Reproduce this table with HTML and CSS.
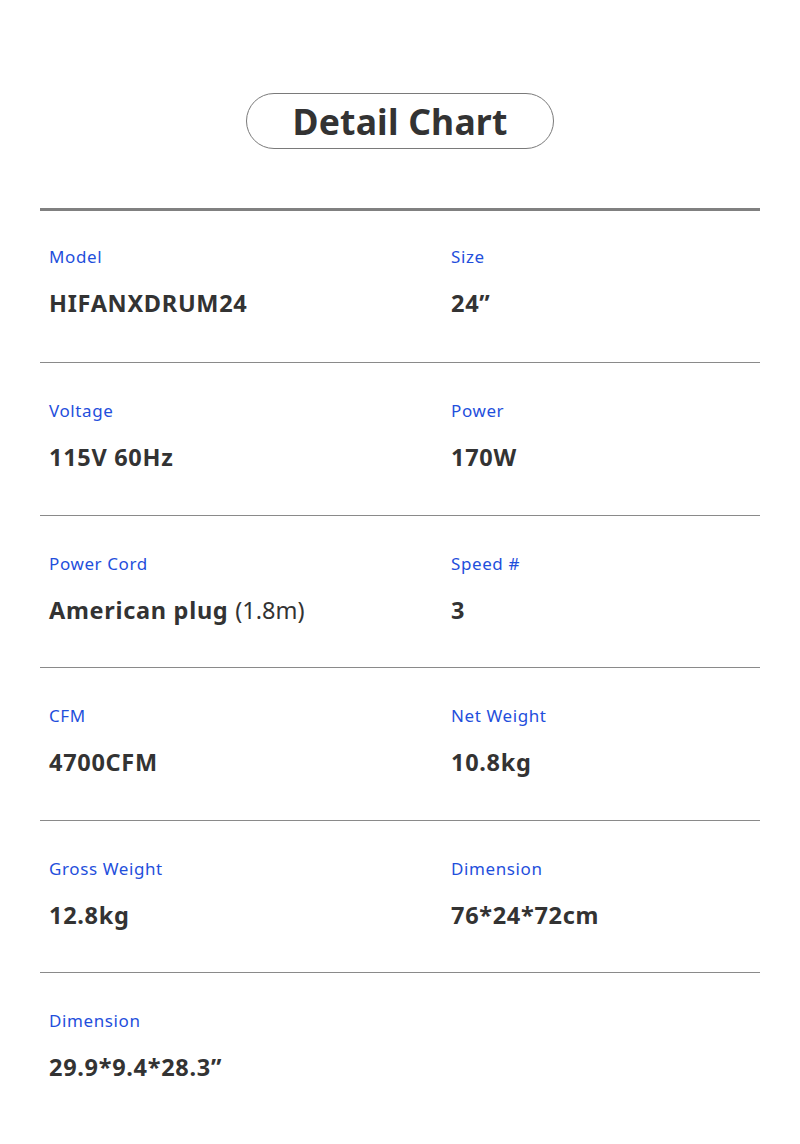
FILE: index.html
```html
<!DOCTYPE html>
<html lang="en">
<head>
<meta charset="utf-8">
<link rel="stylesheet" href="styles.css">
</head>
<body>
<div class="page">
  <div class="title-wrap"><div class="title">Detail Chart</div></div>
  <div class="chart">
    <div class="row">
      <div class="cell"><div class="label">Model</div><div class="value">HIFANXDRUM24</div></div>
      <div class="cell"><div class="label">Size</div><div class="value">24”</div></div>
    </div>
    <div class="row">
      <div class="cell"><div class="label">Voltage</div><div class="value">115V 60Hz</div></div>
      <div class="cell"><div class="label">Power</div><div class="value">170W</div></div>
    </div>
    <div class="row">
      <div class="cell"><div class="label">Power Cord</div><div class="value">American plug <span class="light">(1.8m)</span></div></div>
      <div class="cell"><div class="label">Speed #</div><div class="value">3</div></div>
    </div>
    <div class="row">
      <div class="cell"><div class="label">CFM</div><div class="value">4700CFM</div></div>
      <div class="cell"><div class="label">Net Weight</div><div class="value">10.8kg</div></div>
    </div>
    <div class="row">
      <div class="cell"><div class="label">Gross Weight</div><div class="value">12.8kg</div></div>
      <div class="cell"><div class="label">Dimension</div><div class="value">76*24*72cm</div></div>
    </div>
    <div class="row last">
      <div class="cell"><div class="label">Dimension</div><div class="value">29.9*9.4*28.3”</div></div>
    </div>
  </div>
</div>
</body>
</html>
```
FILE: styles.css
```css
html, body {
  margin: 0;
  padding: 0;
  background: #ffffff;
}
body {
  font-family: "Noto Sans", "Open Sans", sans-serif;
  color: #333333;
}
.page {
  width: 800px;
  height: 1144px;
  box-sizing: border-box;
  padding-top: 93px;
}
.title-wrap {
  display: flex;
  justify-content: center;
}
.title {
  width: 306px;
  height: 54px;
  border: 1px solid #7a7a7a;
  border-radius: 28px;
  display: flex;
  align-items: center;
  justify-content: center;
  font-size: 35.5px;
  font-weight: 700;
  color: #333333;
  letter-spacing: 0.2px;
}
.chart {
  margin: 59px 40px 0 40px;
  border-top: 3px solid #808080;
}
.row {
  display: grid;
  grid-template-columns: 402px 1fr;
  padding: 36px 0 42.5px 9px;
  border-bottom: 1px solid #8a8a8a;
}
.row:first-child {
  padding-top: 34px;
  padding-bottom: 44px;
}
.row.last {
  border-bottom: none;
}
.label {
  font-size: 17px;
  line-height: 24px;
  color: #1f4fdc;
  letter-spacing: 0.6px;
}
.value {
  margin-top: 19px;
  font-size: 23.5px;
  line-height: 30px;
  font-weight: 700;
  color: #333333;
  letter-spacing: 0.7px;
}
.value .light {
  font-weight: 400;
  letter-spacing: 0;
}
```
